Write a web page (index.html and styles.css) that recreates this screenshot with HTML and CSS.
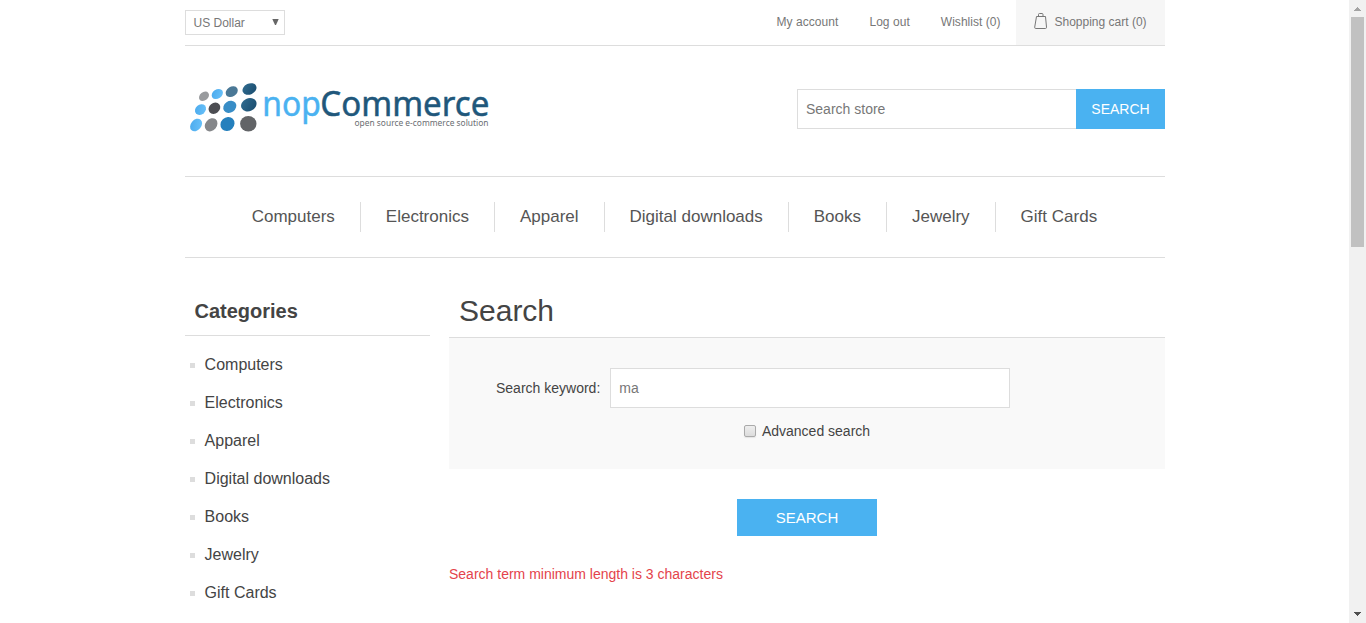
FILE: index.html
```html
<!DOCTYPE html>
<html lang="en">
<head>
<meta charset="utf-8">
<title>nopCommerce - Search</title>
<link rel="stylesheet" href="styles.css">
</head>
<body>
<div class="viewport">
  <div class="page">
    <header class="topbar">
      <div class="currency"><span>US Dollar</span><svg width="7" height="6" viewBox="0 0 7 6"><path d="M0.300 0H6.700L4 6H3z" fill="#666"/></svg></div>
      <nav class="account">
        <a class="acc-my">My account</a>
        <a class="acc-out">Log out</a>
        <a class="acc-wish">Wishlist (0)</a>
        <a class="cart"><svg width="14" height="18" viewBox="0 0 14 18" fill="none" stroke="#777"><path d="M2.500 4.500H11.500L12.500 15.200Q12.500 16.500 11.500 16.500H1.800Q0.500 16.500 0.700 15.200Z"/><path d="M4.500 4.500V2.500Q4.500 1.500 5.500 1.500H8Q9 1.500 9 2.500V4.500"/></svg><span>Shopping cart (0)</span></a>
      </nav>
    </header>
    <div class="brand">
      <svg class="logo" width="310" height="65" viewBox="185 75 310 65">
        <defs>
          <linearGradient id="sky" x1="0" y1="0" x2="1" y2="1"><stop offset="0" stop-color="#48a8ec"/><stop offset="1" stop-color="#6cc4fb"/></linearGradient>
          <linearGradient id="navy" x1="0" y1="0" x2="1" y2="1"><stop offset="0" stop-color="#326d91"/><stop offset="1" stop-color="#194b6d"/></linearGradient>
        </defs>
        <ellipse cx="204" cy="96.300" rx="5.500" ry="4.100" transform="rotate(-38 204 96.300)" fill="#999b9e"/>
        <ellipse cx="217.300" cy="94" rx="6.100" ry="4.500" transform="rotate(-35 217.300 94)" fill="url(#sky)"/>
        <ellipse cx="231.700" cy="91.700" rx="6.500" ry="4.900" transform="rotate(-32 231.700 91.700)" fill="#4a7896"/>
        <ellipse cx="249.500" cy="89" rx="7.300" ry="5.400" transform="rotate(-25 249.500 89)" fill="url(#navy)"/>
        <ellipse cx="200.500" cy="109.600" rx="6" ry="4.900" transform="rotate(-42 200.500 109.600)" fill="url(#sky)"/>
        <ellipse cx="214.400" cy="108.300" rx="6.300" ry="5.200" transform="rotate(-40 214.400 108.300)" fill="#4c4d52"/>
        <ellipse cx="229.800" cy="106.800" rx="6.900" ry="5.700" transform="rotate(-35 229.800 106.800)" fill="#388dc6"/>
        <ellipse cx="248.800" cy="104.700" rx="8" ry="6.400" transform="rotate(-25 248.800 104.700)" fill="url(#navy)"/>
        <ellipse cx="196.100" cy="125" rx="7" ry="5.200" transform="rotate(-50 196.100 125)" fill="url(#sky)"/>
        <ellipse cx="211.100" cy="124.800" rx="7.200" ry="5.700" transform="rotate(-50 211.100 124.800)" fill="#85878a"/>
        <ellipse cx="227.500" cy="124" rx="7.500" ry="6.600" transform="rotate(-45 227.500 124)" fill="#2580bd"/>
        <ellipse cx="248.300" cy="123.800" rx="8.200" ry="7.700" fill="#626467"/>
        <text x="262.300" y="116.300" class="logo-name light" textLength="58.500" lengthAdjust="spacingAndGlyphs">nop</text>
        <text x="320.300" y="116.300" class="logo-name dark" textLength="169" lengthAdjust="spacingAndGlyphs">Commerce</text>
        <text x="354.500" y="126" class="logo-tag" textLength="134" lengthAdjust="spacingAndGlyphs">open source e-commerce solution</text>
      </svg>
      <form class="store-search"><input type="text" placeholder="Search store"><button type="button">SEARCH</button></form>
    </div>
    <nav class="menu"><a>Computers</a><a>Electronics</a><a>Apparel</a><a>Digital downloads</a><a>Books</a><a>Jewelry</a><a>Gift Cards</a></nav>
    <div class="columns">
      <aside class="side">
        <h2>Categories</h2>
        <ul><li>Computers</li><li>Electronics</li><li>Apparel</li><li>Digital downloads</li><li>Books</li><li>Jewelry</li><li>Gift Cards</li></ul>
      </aside>
      <main class="main">
        <h1>Search</h1>
        <div class="panel">
          <div class="keyword"><label for="q">Search keyword:</label><input id="q" type="text" value="ma"></div>
          <div class="advanced"><span class="check"></span><span>Advanced search</span></div>
        </div>
        <button class="submit" type="button">SEARCH</button>
        <p class="warning">Search term minimum length is 3 characters</p>
      </main>
    </div>
  </div>
  <div class="scrollbar">
    <svg width="7" height="4" viewBox="0 0 7 4" shape-rendering="crispEdges"><path d="M3 0h1v1h1v1h1v1h1v1H0V3h1V2h1V1h1z" fill="#a3a3a3"/></svg>
    <div class="thumb"></div>
    <svg class="down" width="7" height="4" viewBox="0 0 7 4" shape-rendering="crispEdges"><path d="M0 0h7v1H6v1H5v1H4v1H3V3H2V2H1V1H0z" fill="#505050"/></svg>
  </div>
</div>
</body>
</html>
```
FILE: styles.css
```css
* { box-sizing: border-box; }
body { margin: 0; background: #fff; color: #444; font: 14px "Liberation Sans", Arial, sans-serif; overflow: hidden; }
input, button { font-family: inherit; margin: 0; border-radius: 0; outline: 0; }
.viewport { display: flex; height: 623px; }
.page { width: 980px; margin: 0 184px 0 185px; flex: none; }

.topbar { display: flex; justify-content: space-between; height: 46px; border-bottom: 1px solid #ddd; font-size: 12px; color: #777; }
.currency { display: flex; align-items: center; justify-content: space-between; width: 100px; height: 25px; margin-top: 10px; padding: 0 5px 0 7.500px; border: 1px solid #ddd; }
.currency svg { margin-top: -1px; }
.account { display: flex; line-height: 44px; }
.acc-my { margin-right: 31px; letter-spacing: 0.050px; }
.acc-out { margin-right: 31px; letter-spacing: 0.050px; }
.acc-wish { margin-right: 15.500px; letter-spacing: 0.030px; }
.cart { display: flex; width: 149px; padding-left: 18px; background: #f6f6f6; }
.cart svg { margin: 12px 6.500px 0 0; }

.brand { display: flex; justify-content: space-between; height: 131px; border-bottom: 1px solid #ddd; }
.logo { margin-top: 29px; }
.logo-name { font: 34px "Noto Sans", sans-serif; stroke-width: 0.500px; }
.light { fill: #4ab2f1; stroke: #4ab2f1; }
.dark { fill: #20577b; stroke: #20577b; }
.logo-tag { font: 8px "Noto Sans", sans-serif; fill: #6b6e72; }
.store-search { display: flex; height: 40px; margin-top: 43px; }
.store-search input { width: 279px; padding: 0 8px; border: 1px solid #ddd; border-right: 0; font-size: 14px; color: #777; }
.store-search input::placeholder { color: #777; opacity: 1; }
.store-search button { width: 89px; padding: 0; border: 0; background: #4ab2f1; color: #fff; font-size: 14px; }

.menu { display: flex; height: 81px; padding: 25px 0 0 42px; border-bottom: 1px solid #ddd; }
.menu a { height: 30px; line-height: 29px; padding: 0 25.300px 0 24.700px; font-size: 17px; color: #555; border-right: 1px solid #ddd; white-space: nowrap; }
.menu a:last-child { border: 0; }

.columns { display: flex; gap: 19px; }
.side { width: 245px; padding-top: 30px; }
.side h2 { margin: 0; height: 48px; padding-left: 9.500px; border-bottom: 1px solid #ddd; font-size: 20px; line-height: 46px; }
.side ul { list-style: none; margin: 10px 0 0; padding: 0 0 0 5px; }
.side li { display: flex; align-items: center; gap: 9.600px; height: 38px; font-size: 16px; }
.side li::before { content: ""; width: 5px; height: 5px; background: #ddd; }
.main { width: 716px; padding-top: 30px; }
.main h1 { margin: 0; height: 50px; padding-left: 10px; border-bottom: 1px solid #ddd; font-size: 30px; font-weight: 400; line-height: 45px; }
.panel { height: 131px; padding-top: 30px; background: #f9f9f9; }
.keyword { display: flex; align-items: center; gap: 10px; padding-left: 47px; }
.keyword input { width: 400px; height: 40px; padding: 0 8px; border: 1px solid #ddd; font-size: 14px; color: #777; background: #fff; }
.advanced { display: flex; justify-content: center; align-items: center; gap: 6px; margin-top: 15px; }
.check { width: 12px; height: 12px; border: 1px solid #aaa; border-radius: 2px; background: linear-gradient(#eee, #dcdcdc); box-shadow: 0 1px 1px #e4e4e4; }
.submit { display: block; width: 140px; height: 37px; margin: 30px auto 0; padding: 0; border: 0; background: #4ab2f1; color: #fff; font-size: 15px; }
.warning { margin: 30px 0 0; color: #e4434b; line-height: 16px; }

.scrollbar { display: flex; flex-direction: column; align-items: center; width: 17px; flex: none; padding: 7px 0; background: #f1f1f1; }
.thumb { width: 13px; height: 230px; margin-top: 6px; background: #c1c1c1; }
.down { margin-top: auto; }
```
